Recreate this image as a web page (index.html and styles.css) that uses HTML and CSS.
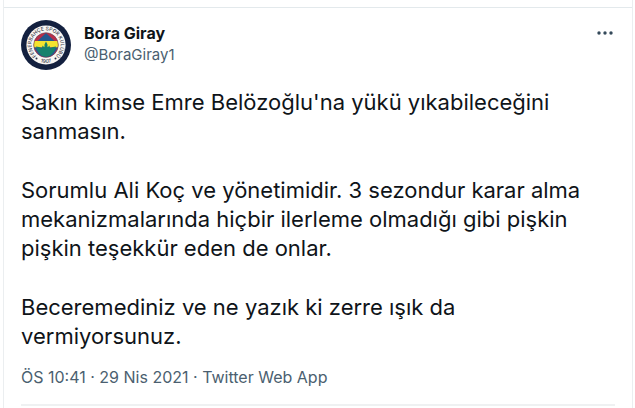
FILE: index.html
```html
<!DOCTYPE html>
<html lang="tr">
<head>
<meta charset="utf-8">
<meta name="viewport" content="width=device-width, initial-scale=1">
<title>Bora Giray</title>
<link rel="stylesheet" href="styles.css">
</head>
<body>
<main class="column">
  <article class="tweet">
    <header class="author">
      <a class="avatar" href="#" aria-label="Bora Giray">
        <svg viewBox="0 0 50 50" aria-hidden="true">
          <defs>
            <path id="ring-top" d="M14.7 35.3A14.600 14.600 0 1 1 35.3 35.3"/>
            <path id="ring-bottom" d="M12.3 37.7A18 18 0 0 0 37.7 37.7"/>
            <clipPath id="shield"><circle cx="25" cy="25" r="12.300"/></clipPath>
          </defs>
          <circle cx="25" cy="25" r="25" fill="#13203f"/>
          <circle cx="25" cy="25" r="19.6" fill="#f8f6f4"/>
          <g clip-path="url(#shield)">
            <path fill="#b92e4a" d="M12 12h26v26H12z"/>
            <path fill="#23588f" d="M25 13l8.5 8h-17z"/>
            <path fill="#f4e32f" d="M12 21h26v6.500H12z"/>
            <path fill="#23588f" d="M13 27.500h24L32 35l-7 3-7-3z"/>
            <path fill="#16816c" d="M25 21.500l1.500 3v3l2-2 .5 3 3-1.500 3-.5-2 5-4 4.500-4 1-4-1-4-4.500-2-5 3 .5 3 1.500.5-3 2 2v-3z"/>
          </g>
          <circle cx="25" cy="25" r="12.300" fill="none" stroke="#5d3e53" stroke-width=".6"/>
          <text class="crest-text"><textPath href="#ring-top" startOffset="50%" text-anchor="middle">FENERBAHÇE SPOR KULÜBÜ</textPath></text>
          <text class="crest-text"><textPath href="#ring-bottom" startOffset="50%" text-anchor="middle">1907</textPath></text>
          <circle cx="15.500" cy="38.500" r="1" fill="#2b3046"/>
          <circle cx="34.500" cy="38.500" r="1" fill="#2b3046"/>
        </svg>
      </a>
      <div class="names">
        <a class="name" href="#">Bora Giray</a>
        <a class="handle" href="#">@BoraGiray1</a>
      </div>
      <button class="more" type="button" aria-label="Daha fazla">
        <svg viewBox="0 0 16 4" aria-hidden="true"><circle cx="2" cy="2" r="1.700"/><circle cx="8" cy="2" r="1.700"/><circle cx="14" cy="2" r="1.700"/></svg>
      </button>
    </header>
    <div class="body">
      <p>Sakın kimse Emre Belözoğlu'na yükü yıkabileceğini<br>sanmasın.</p>
      <p>Sorumlu Ali Koç ve yönetimidir. 3 sezondur karar alma<br>mekanizmalarında hiçbir ilerleme olmadığı gibi pişkin<br>pişkin teşekkür eden de onlar.</p>
      <p>Beceremediniz ve ne yazık ki zerre ışık da<br>vermiyorsunuz.</p>
    </div>
    <footer class="meta"><a href="#">ÖS 10:41 · 29 Nis 2021</a> · <a href="#">Twitter Web App</a></footer>
  </article>
</main>
</body>
</html>
```
FILE: styles.css
```css
* { box-sizing: border-box; }

body {
  margin: 0;
  background: #fff;
  color: #0f1419;
  font-family: Inter, "Liberation Sans", sans-serif;
}

a { color: inherit; text-decoration: none; }

.column {
  min-height: 100vh;
  margin: 0 2px 0 3px;
  padding-top: 7px;
  border: solid #ebeef0;
  border-width: 0 1px;
}

.tweet {
  padding: 12px 17px 0;
  border-top: 1px solid #e3e9ec;
}

.author { display: flex; align-items: flex-start; }

.avatar { width: 50px; height: 50px; margin-right: 13px; }
.avatar svg { display: block; width: 100%; height: 100%; }

.crest-text { font-size: 5px; font-weight: 500; fill: #3b3d4b; }

.names {
  display: flex;
  flex: 1;
  flex-direction: column;
  align-items: flex-start;
  padding-top: 3px;
  line-height: 21px;
}

.name { font-size: 16px; font-weight: 700; }
.handle { font-size: 15px; }
.handle, .meta { color: #4b5f70; }

.more {
  margin: 11px 2px 0 0;
  padding: 0;
  border: 0;
  background: none;
}
.more svg { display: block; width: 16px; height: 4px; fill: #34495a; }

.body {
  display: grid;
  gap: 30px;
  margin-top: 18px;
  font-size: 22px;
  line-height: 29px;
  white-space: nowrap;
}
.body p { margin: 0; }

.meta {
  margin-top: 16px;
  padding-bottom: 17px;
  border-bottom: 2px solid #eff1f2;
  font-size: 16px;
  line-height: 20px;
}
```
